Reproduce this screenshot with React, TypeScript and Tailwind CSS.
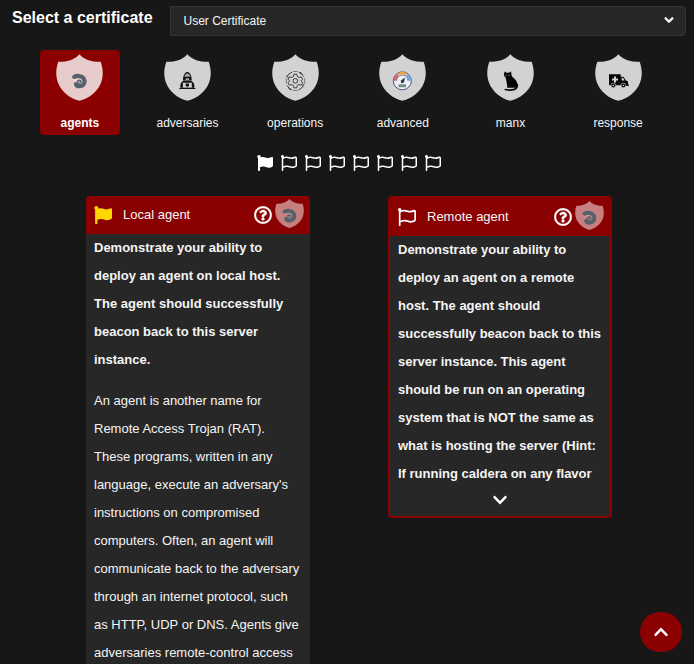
import { useState } from "react";
import type { ReactNode } from "react";
import { FaFlag, FaRegFlag, FaRegQuestionCircle, FaChevronDown, FaChevronUp } from "react-icons/fa";

interface Badge {
  name: string;
  icon: ReactNode;
}

interface FlagCardProps {
  title: string;
  completed?: boolean;
  expanded?: boolean;
  children: ReactNode;
}

// All glyphs are drawn in the shield's 141x140 space
function AgentsGlyph() {
  return (
    <g fill="none" strokeLinecap="round" stroke="#56616a">
      <path d="M55 68 C62 64 77 64 83 73 C89 83 84 93 75 95 C68 97 62 94 60 90" strokeWidth="13" />
      <path d="M65 81 C70 77 76 79 75 83 C74 87 69 88 65 87" strokeWidth="5" />
      <path d="M51 75 C57 78 62 73 67 73 C76 72 80 79 77 85 C75 89 70 89 67 87" stroke="#fff" strokeOpacity="0.35" strokeWidth="2" />
    </g>
  );
}

function AdversariesGlyph() {
  return (
    <g fill="#111">
      <path d="M70 53 C60 56 57 67 57 79 H83 C83 67 80 56 70 53Z" />
      <path d="M70 57 C64 59 61 64 61 68 H79 C79 64 76 59 70 57Z" fill="#a8a8a8" />
      <path d="M64 73 H76 L74 78 L70 76 L66 78Z" fill="#d2d2d2" />
      <path d="M49 101 C48 90 51 83 59 80 H81 C89 83 92 90 91 101Z" />
      <rect x="55" y="84" width="30" height="18" rx="2" fill="#d2d2d2" stroke="#111" strokeWidth="3" />
      <path d="M65 88 H75 V94 L70 99 L65 94Z" />
      <path d="M46 103 H94" stroke="#111" strokeWidth="3" />
    </g>
  );
}

function OperationsGlyph() {
  return (
    <g fill="none" stroke="#222" strokeWidth="2.5">
      <circle cx="70" cy="80" r="7" />
      <path d="M66 60 H74 L76 67 L81 70 L88 68 L92 75 L87 80 L92 86 L88 93 L81 91 L76 94 L74 101 H66 L64 94 L59 91 L52 93 L48 86 L53 80 L48 75 L52 68 L59 70 L64 67Z" />
      <path d="M45 67 A28 28 0 0 1 60 54 M80 54 A28 28 0 0 1 95 67 M95 94 A28 28 0 0 1 80 107 M60 107 A28 28 0 0 1 45 94" />
      <path d="M43 72 V88 M98 72 V88 M63 52 H77 M63 109 H77" strokeWidth="1.5" />
      <path d="M84 54 L91 60 M49 101 L56 107 M43 65 L49 70 M97 90 L91 95" strokeWidth="3" />
    </g>
  );
}

function AdvancedGlyph() {
  return (
    <g fill="none">
      <circle cx="70" cy="80" r="27" fill="#edf1f8" stroke="#4d5573" strokeWidth="3" />
      <path d="M48 80 A22 22 0 0 1 57 62" stroke="#e0646c" strokeWidth="8" />
      <path d="M58 61 A22 22 0 0 1 82 61" stroke="#efa645" strokeWidth="8" />
      <path d="M83 62 A22 22 0 0 1 92 80" stroke="#75a7e6" strokeWidth="8" />
      <path d="M53 80 A17 17 0 0 1 87 80" stroke="#4d5573" strokeWidth="2" />
      <path d="M78 70 L75 85 L67 87 L65 80Z" fill="#263654" />
      <rect x="60" y="92" width="20" height="6" fill="#7ca98d" stroke="#4d6b69" strokeWidth="2" />
    </g>
  );
}

function ManxGlyph() {
  return (
    <g fill="#050505">
      <path d="M53 52 L59 56 H66 L72 51 L74 65 C77 72 88 75 91 88 C93 97 90 101 84 101 H60 L61 97 L58 80 C56 75 57 72 56 70 C50 66 50 60 53 52Z" />
      <path d="M91 92 C92 108 72 110 55 106" fill="none" stroke="#050505" strokeWidth="5" strokeLinecap="round" />
      <circle cx="57" cy="63" r="1.5" fill="#d2d2d2" />
      <circle cx="66" cy="63" r="1.5" fill="#d2d2d2" />
    </g>
  );
}

function ResponseGlyph() {
  return (
    <g fill="#050505">
      <path d="M42 60 H77 V68 H85 L93 79 L99 82 V93 H42Z" />
      <path d="M57 67 H63 V73 H69 V79 H63 V85 H57 V79 H51 V73 H57Z" fill="#d2d2d2" />
      <path d="M80 71 H84 L89 79 H80Z" fill="#d2d2d2" />
      <circle cx="55" cy="94" r="7" stroke="#d2d2d2" strokeWidth="2" />
      <circle cx="85" cy="94" r="7" stroke="#d2d2d2" strokeWidth="2" />
      <circle cx="55" cy="94" r="2.5" fill="#d2d2d2" />
      <circle cx="85" cy="94" r="2.5" fill="#d2d2d2" />
      <path d="M91 91 H102 V95 H93Z" />
    </g>
  );
}

function Shield({ className, fill, children }: { className: string; fill: string; children: ReactNode }) {
  return (
    <svg viewBox="0 0 141 140" className={className} aria-hidden="true">
      <path
        d="M70 0 C58 15 38 23 7 23 C0 42 -2 64 6 86 C16 112 42 134 70 140 C99 134 125 112 135 86 C143 64 141 42 134 23 C103 23 83 15 70 0Z"
        fill={fill}
      />
      {children}
    </svg>
  );
}

const badges: Badge[] = [
  { name: "agents", icon: <AgentsGlyph /> },
  { name: "adversaries", icon: <AdversariesGlyph /> },
  { name: "operations", icon: <OperationsGlyph /> },
  { name: "advanced", icon: <AdvancedGlyph /> },
  { name: "manx", icon: <ManxGlyph /> },
  { name: "response", icon: <ResponseGlyph /> },
];

const flags = [true, false, false, false, false, false, false, false];

function FlagCard({ title, completed = false, expanded = false, children }: FlagCardProps) {
  return (
    <article
      className={`mx-auto w-56 rounded bg-[#272727] ${expanded ? "" : "border-2 border-[#8b0000]"}`}
    >
      <header
        className={`flex h-[38px] items-center bg-[#8b0000] pr-[6px] pl-2 ${expanded ? "rounded-t" : ""}`}
      >
        {completed ? (
          <FaFlag className="size-[18px] text-[#ffd700]" />
        ) : (
          <FaRegFlag className="size-[18px] text-white" />
        )}
        <h2 className="ml-[11px] flex-1 text-[13px]">{title}</h2>
        <button type="button" aria-label={`Help for ${title}`} className="mr-[3px]">
          <FaRegQuestionCircle className="size-[18px] stroke-[12] stroke-white text-white" />
        </button>
        <Shield className="mb-1 size-[29px]" fill="#c77f7f">
          <g transform="translate(70 80) scale(1.55) translate(-70 -80)">
            <AgentsGlyph />
          </g>
        </Shield>
      </header>
      <div className="pr-[6px] pl-2 text-[13px] leading-7">{children}</div>
      {!expanded && (
        <button type="button" aria-label="Show more" className="flex h-7 w-full justify-center pt-1">
          <FaChevronDown className="size-4 text-white" />
        </button>
      )}
    </article>
  );
}

export default function App() {
  const [active, setActive] = useState("agents");

  return (
    <main className="h-screen overflow-hidden bg-[#171717] font-['Liberation_Sans',Arial,sans-serif] text-[#f5f5f5]">
      <div className="flex items-start gap-[17px] pt-[6px] pr-2 pl-3">
        <label htmlFor="certificate" className="text-base font-bold text-white">
          Select a certificate
        </label>
        <div className="relative flex-1">
          <select
            id="certificate"
            className="block h-[30px] w-full appearance-none rounded-r border border-[#363636] bg-[#272727] px-[13px] text-xs"
          >
            <option>User Certificate</option>
          </select>
          <FaChevronDown className="pointer-events-none absolute top-[9px] right-3 size-[10px] stroke-[40] stroke-white text-white" />
        </div>
      </div>

      <nav className="mt-[14px] flex justify-around pr-[22px] pl-[26px]">
        {badges.map((badge) => (
          <button
            key={badge.name}
            type="button"
            onClick={() => setActive(badge.name)}
            className={`flex h-[85px] w-20 flex-col items-center rounded pt-1 text-xs ${
              active === badge.name ? "bg-[#8b0000] font-bold text-white" : ""
            }`}
          >
            <Shield className="size-[47px]" fill={active === badge.name ? "#e8cccc" : "#d2d2d2"}>
              {badge.icon}
            </Shield>
            <span className="mt-[14px]">{badge.name}</span>
          </button>
        ))}
      </nav>

      <div className="mt-5 flex justify-center gap-2 pl-1 text-base text-white">
        {flags.map((done, i) => (done ? <FaFlag key={i} /> : <FaRegFlag key={i} />))}
      </div>

      <section className="mt-[25px] grid grid-cols-2 items-start pr-[43px] pl-[47px]">
        <FlagCard title="Local agent" completed expanded>
          <p className="mb-[13px] font-bold">
            Demonstrate your ability to deploy an agent on local host. The agent should successfully beacon back
            to this server instance.
          </p>
          <p>
            An agent is another name for Remote Access Trojan (RAT). These programs, written in any language,
            execute an adversary's instructions on compromised computers. Often, an agent will communicate back to
            the adversary through an internet protocol, such as HTTP, UDP or DNS. Agents give adversaries
            remote-control access
          </p>
        </FlagCard>
        <FlagCard title="Remote agent">
          <p className="font-bold">
            Demonstrate your ability to deploy an agent on a remote host. The agent should successfully beacon
            back to this server instance. This agent should be run on an operating system that is NOT the same as
            what is hosting the server (Hint: If running caldera on any flavor
          </p>
        </FlagCard>
      </section>

      <button
        type="button"
        aria-label="Back to top"
        className="fixed right-3 bottom-3 flex h-10 w-[42px] items-center justify-center rounded-full bg-[#8b0000] text-white"
      >
        <FaChevronUp className="size-4" />
      </button>
    </main>
  );
}
